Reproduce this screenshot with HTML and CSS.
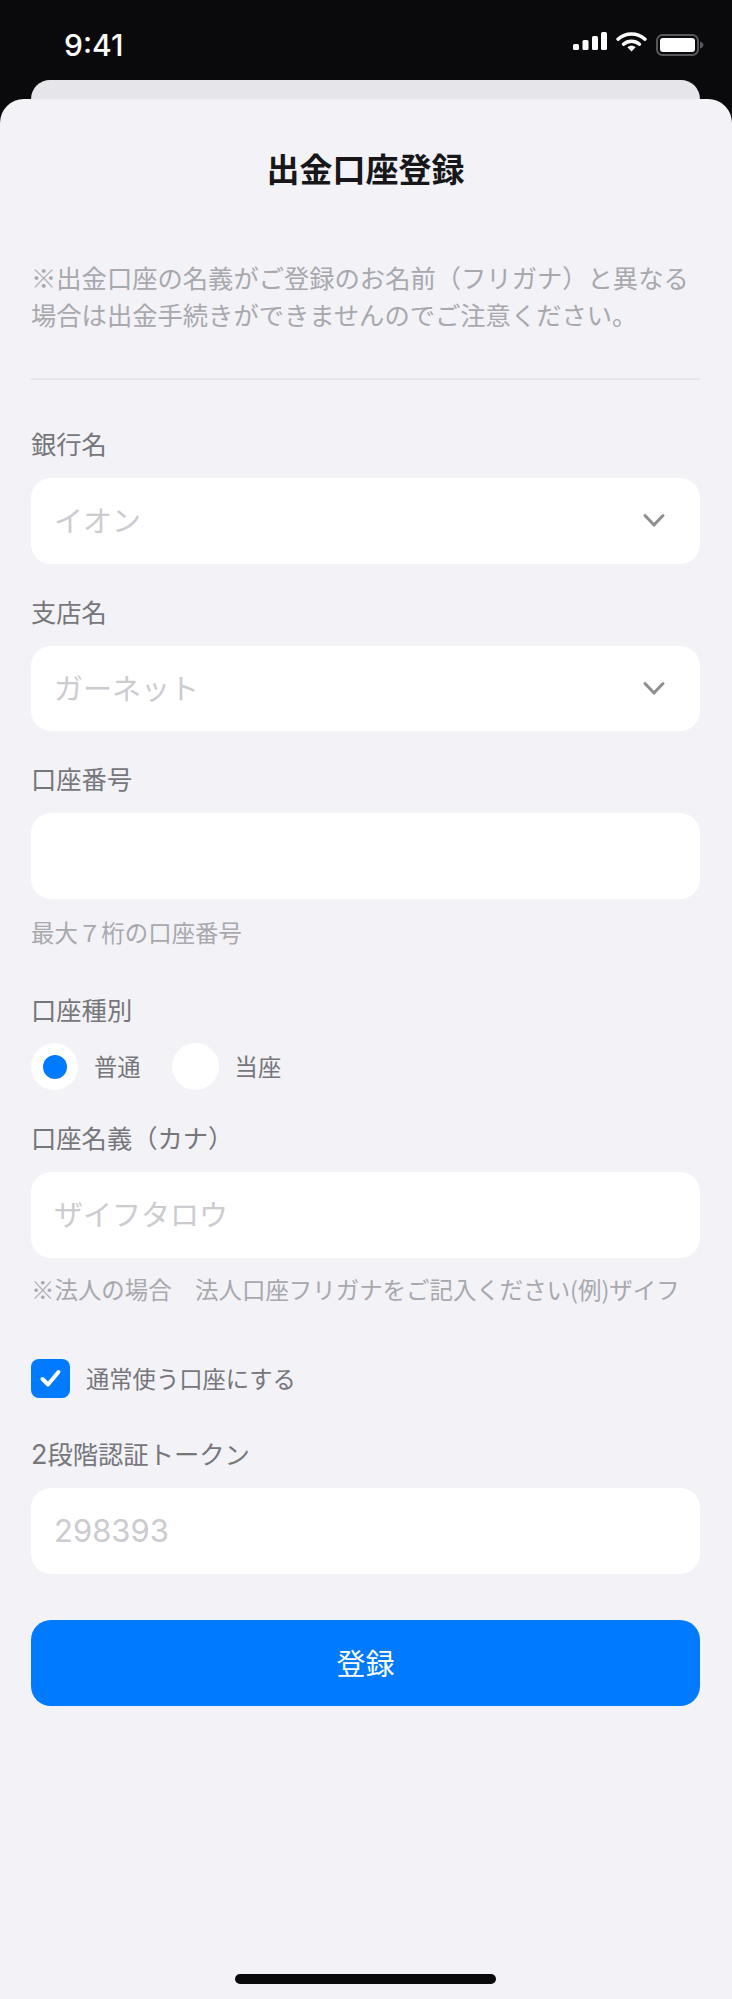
FILE: index.html
```html
<!DOCTYPE html>
<html lang="ja">
<head>
<meta charset="utf-8">
<title>出金口座登録</title>
<link rel="stylesheet" href="styles.css">
</head>
<body>
<div class="screen">
  <header class="status">
    <span class="time">9:41</span>
    <div class="status-icons">
      <svg class="i-signal" width="34" height="18" viewBox="0 0 34 18"><rect x="0" y="12" width="6" height="6" rx="1.5"/><rect x="9.5" y="8" width="6" height="10" rx="1.5"/><rect x="19" y="4" width="6" height="14" rx="1.5"/><rect x="28" y="0" width="6" height="18" rx="1.5"/></svg>
      <svg class="i-wifi" width="31" height="21" viewBox="0 0 31 21" fill="none"><path d="M2 8.2C9.5 1.2 21.5 1.2 29 8.2" stroke="#fff" stroke-width="3.4" stroke-linecap="round"/><path d="M7.5 13.2C12 9.2 19 9.2 23.5 13.2" stroke="#fff" stroke-width="3.4" stroke-linecap="round"/><path d="M11.4 16.2C13.6 14.2 17.4 14.2 19.6 16.2L15.5 20.5Z" fill="#fff"/></svg>
      <svg class="i-batt" width="48" height="22" viewBox="0 0 48 22" fill="none"><rect x="1" y="1" width="41" height="20" rx="5.5" stroke="#58585c" stroke-width="2"/><rect x="4" y="4" width="35" height="14" rx="3" fill="#fff"/><path d="M44 7.5c2 .5 3.5 2 3.5 3.5s-1.500 3-3.500 3.500Z" fill="#58585c"/></svg>
    </div>
  </header>
  <div class="back-card"></div>
  <main class="sheet">
    <h1 class="title">出金口座登録</h1>
    <p class="note">※出金口座の名義がご登録のお名前（フリガナ）と異なる<br>場合は出金手続きができませんのでご注意ください。</p>
    <hr class="divider">

    <div class="field">
      <div class="label">銀行名</div>
      <div class="input"><span class="ph">イオン</span>
        <svg class="chev" width="26" height="16" viewBox="0 0 26 16" fill="none"><path d="M4 3.500l9 9.500 9-9.500" stroke="#8e8e93" stroke-width="3" stroke-linecap="round" stroke-linejoin="round"/></svg>
      </div>
    </div>
    <div class="field">
      <div class="label">支店名</div>
      <div class="input"><span class="ph">ガーネット</span>
        <svg class="chev" width="26" height="16" viewBox="0 0 26 16" fill="none"><path d="M4 3.500l9 9.500 9-9.500" stroke="#8e8e93" stroke-width="3" stroke-linecap="round" stroke-linejoin="round"/></svg>
      </div>
    </div>
    <div class="field">
      <div class="label">口座番号</div>
      <div class="input"></div>
      <div class="hint">最大７桁の口座番号</div>
    </div>

    <div class="label label-type">口座種別</div>
    <div class="radios">
      <div class="radio on"></div><span class="radio-text">普通</span>
      <div class="radio"></div><span class="radio-text">当座</span>
    </div>

    <div class="field field-name">
      <div class="label">口座名義（カナ）</div>
      <div class="input"><span class="ph">ザイフタロウ</span></div>
      <div class="hint">※法人の場合　法人口座フリガナをご記入ください(例)ザイフ</div>
    </div>

    <div class="check-row">
      <div class="check">
        <svg width="39" height="39" viewBox="0 0 39 39" fill="none"><path d="M11.500 20l5.500 5.500L27.500 13" stroke="#fff" stroke-width="4" stroke-linecap="round" stroke-linejoin="round"/></svg>
      </div>
      <span class="check-text">通常使う口座にする</span>
    </div>

    <div class="field field-token">
      <div class="label"><span class="lat-big">2</span>段階認証トークン</div>
      <div class="input"><span class="ph ph-num">298393</span></div>
    </div>

    <button class="submit" type="button">登録</button>
    <div class="spacer"></div>
    <div class="home"></div>
  </main>
</div>
</body>
</html>
```
FILE: styles.css
```css
* { box-sizing: border-box; }
html, body { margin: 0; padding: 0; }
body {
  background: #0a0a0c;
  font-family: "Noto Sans CJK JP", "Noto Sans", sans-serif;
  color: #76767b;
}
.screen {
  width: 732px;
  height: 1999px;
  display: flex;
  flex-direction: column;
  overflow: hidden;
}
.status {
  height: 80px;
  flex: none;
  display: flex;
  justify-content: space-between;
  align-items: flex-start;
  padding: 31px 28px 0 64px;
}
.time {
  font-family: Inter, "Liberation Sans", sans-serif;
  font-size: 30px;
  line-height: 28px;
  font-weight: 500;
  color: #fff;
}
.status-icons { display: flex; align-items: flex-start; }
.i-signal { fill: #fff; margin-top: 1px; }
.i-wifi { margin-left: 9px; }
.i-batt { margin-left: 9px; margin-top: 3px; }
.back-card {
  height: 19px;
  flex: none;
  margin: 0 32px 0 31px;
  background: #e5e5ea;
  border-radius: 22px 22px 0 0;
}
.sheet {
  flex: 1;
  display: flex;
  flex-direction: column;
  padding: 48px 32px 15px 31px;
  background: #f2f2f7;
  border-radius: 24px 24px 0 0;
}
.title {
  margin: 0;
  font-size: 33px;
  line-height: 42px;
  font-weight: 700;
  text-align: center;
  color: #17171a;
}
.note {
  margin: 70px 0 0;
  font-size: 25.3px;
  line-height: 37px;
  color: #a8a8ad;
  white-space: nowrap;
}
.divider {
  width: 100%;
  height: 2px;
  margin: 45px 0 47px;
  border: 0;
  background: #e5e5ea;
}
.field { margin-bottom: 31px; }
.label {
  height: 36px;
  font-size: 25.3px;
  line-height: 33px;
  white-space: nowrap;
  margin-bottom: 15px;
}
.lat-big { font-family: Inter, sans-serif; font-size: 27px; line-height: 1; }
.input {
  height: 85.5px;
  display: flex;
  align-items: center;
  justify-content: space-between;
  padding: 0 33px 0 23px;
  background: #fff;
  border-radius: 20px;
}
.ph {
  padding-bottom: 3px;
  font-size: 29px;
  color: #cbcbd0;
}
.ph-num {
  padding-bottom: 0;
  font-family: Inter, sans-serif;
  font-size: 31px;
}
.chev { margin-bottom: 1px; }
.hint {
  margin-top: 17px;
  font-size: 23.45px;
  line-height: 32px;
  color: #a8a8ad;
  white-space: nowrap;
}
.label-type { margin: 14.5px 0 14px; }
.radios {
  display: flex;
  align-items: center;
  height: 47px;
}
.radio {
  width: 47px;
  height: 47px;
  flex: none;
  display: flex;
  align-items: center;
  justify-content: center;
  border-radius: 50%;
  background: #fff;
}
.radio.on::after {
  content: "";
  width: 24px;
  height: 24px;
  border-radius: 50%;
  background: #007aff;
}
.radio-text {
  margin: 0 31px 0 16px;
  padding-bottom: 2px;
  font-size: 23.3px;
}
.field-name { margin: 31px 0 0; }
.field-name .hint { margin-top: 15px; }
.check-row {
  display: flex;
  align-items: center;
  margin-top: 54.5px;
}
.check {
  width: 39px;
  height: 39px;
  flex: none;
  border-radius: 8px;
  background: #007aff;
}
.check svg { display: block; }
.check-text {
  margin-left: 16px;
  padding-bottom: 2px;
  font-size: 23.3px;
}
.field-token { margin: 39px 0 46.5px; }
.submit {
  height: 86px;
  flex: none;
  border: 0;
  padding: 0 0 3px;
  font-family: inherit;
  font-size: 29px;
  color: #fff;
  background: #007aff;
  border-radius: 20px;
}
.spacer { flex: 1; }
.home {
  width: 261px;
  height: 10px;
  flex: none;
  align-self: center;
  border-radius: 5px;
  background: #0a0a0c;
}
```
